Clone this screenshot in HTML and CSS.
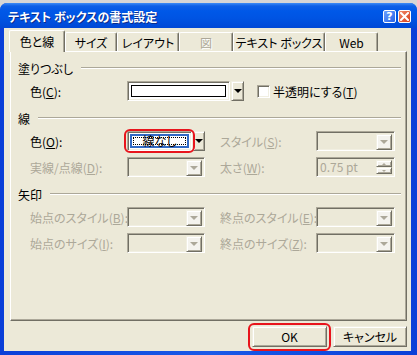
FILE: index.html
```html
<!DOCTYPE html>
<html lang="ja">
<head>
    <meta charset="utf-8">
    <title>テキスト ボックスの書式設定</title>
    <link rel="stylesheet" href="styles.css">
</head>
<body>
<div class="window">
    <div class="titlebar">
        <span class="title">テキスト ボックスの書式設定</span>
        <div class="caption-btns">
            <span class="cap help">?</span>
            <span class="cap close">
                <svg width="9" height="9" viewBox="0 0 9 9"><path d="M1 1 L8 8 M8 1 L1 8" stroke="#fff" stroke-width="2" stroke-linecap="square"/></svg>
            </span>
        </div>
    </div>
    <div class="client">
        <div class="tabs">
            <div class="tab active w-color">色と線</div>
            <div class="tab w-size">サイズ</div>
            <div class="tab w-layout">レイアウト</div>
            <div class="tab w-pic disabled">図</div>
            <div class="tab w-text">テキスト ボックス</div>
            <div class="tab w-web">Web</div>
        </div>
        <div class="panel">
            <div class="group-head">塗りつぶし</div>
            <div class="row first">
                <span class="lbl">色(<u>C</u>):</span>
                <div class="fill-combo">
                    <div class="sunken fill-field"><div class="swatch"></div></div>
                    <div class="raised drop-btn"><i class="arrow"></i></div>
                </div>
                <span class="sunken check"></span>
                <span class="check-lbl">半透明にする(<u>T</u>)</span>
            </div>

            <div class="group-head">線</div>
            <div class="row first">
                <span class="lbl">色(<u>O</u>):</span>
                <div class="line-combo">
                    <div class="sunken line-field">
                        <div class="focus"><div class="dots">線なし</div></div>
                        <span class="mark"></span>
                    </div>
                    <div class="raised drop-btn small"><i class="arrow"></i></div>
                </div>
                <span class="lbl2 off">スタイル(<u>S</u>):</span>
                <div class="sunken combo wide"><div class="raised drop-in"><i class="arrow off"></i></div></div>
            </div>
            <div class="row">
                <span class="lbl off">実線/点線(<u>D</u>):</span>
                <div class="sunken combo"><div class="raised drop-in"><i class="arrow off"></i></div></div>
                <span class="lbl2 off">太さ(<u>W</u>):</span>
                <div class="sunken combo wide spin">
                    <span class="spin-val">0.75 pt</span>
                    <div class="spin-btns">
                        <div class="raised spin-btn"><i class="tri up"></i></div>
                        <div class="raised spin-btn"><i class="tri"></i></div>
                    </div>
                </div>
            </div>

            <div class="group-head">矢印</div>
            <div class="row first">
                <span class="lbl off">始点のスタイル(<u>B</u>):</span>
                <div class="sunken combo"><div class="raised drop-in"><i class="arrow off"></i></div></div>
                <span class="lbl2 off">終点のスタイル(<u>E</u>):</span>
                <div class="sunken combo wide"><div class="raised drop-in"><i class="arrow off"></i></div></div>
            </div>
            <div class="row">
                <span class="lbl off">始点のサイズ(<u>I</u>):</span>
                <div class="sunken combo"><div class="raised drop-in"><i class="arrow off"></i></div></div>
                <span class="lbl2 off">終点のサイズ(<u>Z</u>):</span>
                <div class="sunken combo wide"><div class="raised drop-in"><i class="arrow off"></i></div></div>
            </div>
        </div>
        <div class="buttons">
            <div class="raised btn ok">OK<span class="mark"></span></div>
            <div class="raised btn cancel">キャンセル</div>
        </div>
    </div>
</div>
</body>
</html>
```

FILE: styles.css
```css
body {
    margin: 0;
    background-color: #d6d6d6;
    font-family: "Noto Sans CJK JP", "DejaVu Sans", sans-serif;
    font-size: 12px;
    font-feature-settings: "palt";
    color: #000;
}
u {
    text-decoration: underline;
    text-underline-offset: 1px;
}
.window {
    margin-top: 3px;
    width: 417px;
    height: 352px;
    box-sizing: border-box;
    background: linear-gradient(90deg, #0a3fd8, #1a5ae8 50%, #0a3fd8);
    border-radius: 7px 7px 0 0;
    padding: 0 6px 4px 4px;
    display: flex;
    flex-direction: column;
}
.titlebar {
    height: 25px;
    margin: 0 -6px 0 -4px;
    padding: 0 6px 0 8px;
    border-radius: 7px 7px 0 0;
    background: linear-gradient(#3d8cf7 0, #0d5fe6 3px, #0058e8 8px, #0054e3 60%, #0048d6 100%);
    display: flex;
    align-items: center;
    justify-content: space-between;
}
.title {
    color: #fff;
    font-weight: bold;
    font-size: 12px;
    text-shadow: 1px 1px #0a2c8c;
    padding-top: 1px;
}
.caption-btns {
    display: flex;
    gap: 2px;
    margin-top: 1px;
}
.cap {
    width: 13px;
    height: 13px;
    box-sizing: border-box;
    border: 1px solid #fff;
    border-radius: 2px;
    display: flex;
    align-items: center;
    justify-content: center;
    color: #fff;
    font: bold 11px "DejaVu Sans", sans-serif;
}
.help {
    background: linear-gradient(135deg, #6aa0ff, #2a64e8);
}
.close {
    background: linear-gradient(135deg, #f08a6a, #d8401c);
}
.client {
    flex: 1;
    background-color: #ece9d8;
    display: flex;
    flex-direction: column;
}
.tabs {
    height: 21px;
    margin: 2px 0 0 5px;
    display: flex;
    align-items: flex-end;
}
.tab {
    height: 19px;
    box-sizing: border-box;
    border: 1px solid #fff;
    border-bottom: none;
    border-right: 1px solid #716f64;
    box-shadow: inset -1px 0 #aca899;
    border-radius: 2px 2px 0 0;
    display: flex;
    align-items: center;
    justify-content: center;
    line-height: 1;
    padding-top: 1px;
}
.tab.active {
    height: 22px;
    margin-bottom: -1px;
    position: relative;
    z-index: 1;
    background-color: #ece9d8;
    padding-top: 0;
}
.tab.disabled {
    color: #aca899;
    text-shadow: 1px 1px #fff;
}
.w-color { width: 56px; }
.w-size { width: 52px; }
.w-layout { width: 62px; }
.w-pic { width: 54px; }
.w-text { width: 92px; }
.w-web { width: 53px; }
.panel {
    height: 270px;
    margin: 0 4px 0 6px;
    box-sizing: border-box;
    border: 1px solid #fff;
    border-right-color: #716f64;
    border-bottom-color: #716f64;
    box-shadow: inset -1px -1px #aca899;
    padding: 8px 5px 0 7px;
}
.group-head {
    height: 16px;
    display: flex;
    align-items: center;
    gap: 8px;
    margin-top: 9px;
}
.group-head:first-child {
    margin-top: 0;
}
.group-head::after {
    content: "";
    flex: 1;
    border-top: 1px solid #aca899;
    border-bottom: 1px solid #fff;
}
.row {
    height: 20px;
    margin-top: 6px;
    padding-left: 12px;
    display: flex;
    align-items: center;
}
.row.first {
    margin-top: 5px;
}
.lbl {
    width: 97px;
    flex: none;
    white-space: nowrap;
}
.lbl2 {
    width: 96px;
    margin-left: 15px;
    flex: none;
    white-space: nowrap;
}
.off {
    color: #aca899;
}
.sunken {
    box-sizing: border-box;
    border: 1px solid;
    border-color: #aca899 #fff #fff #aca899;
    box-shadow: inset 1px 1px #716f64, inset -1px -1px #f1efe2;
}
.raised {
    box-sizing: border-box;
    border: 1px solid;
    border-color: #f1efe2 #716f64 #716f64 #f1efe2;
    box-shadow: inset 1px 1px #fff, inset -1px -1px #aca899;
    background-color: #ece9d8;
}
.arrow {
    width: 0;
    height: 0;
    border-left: 4px solid transparent;
    border-right: 4px solid transparent;
    border-top: 4px solid #000;
}
.arrow.off {
    border-top-color: #aca899;
}
.fill-combo {
    display: flex;
    gap: 1px;
    height: 20px;
    width: 117px;
    flex: none;
}
.fill-field {
    width: 103px;
    height: 20px;
    background-color: #fff;
    padding: 3px;
}
.swatch {
    height: 100%;
    box-sizing: border-box;
    border: 1px solid #000;
    background-color: #fff;
}
.drop-btn {
    width: 13px;
    height: 20px;
    display: flex;
    align-items: center;
    justify-content: center;
}
.drop-btn.small {
    width: 12px;
}
.check {
    width: 13px;
    height: 13px;
    background-color: #fff;
    margin-left: 13px;
    flex: none;
}
.check-lbl {
    margin-left: 3px;
}
.line-combo {
    display: flex;
    gap: 1px;
    height: 20px;
    width: 78px;
    flex: none;
}
.line-field {
    width: 66px;
    height: 20px;
    background-color: #fff;
    padding: 2px;
    position: relative;
}
.focus {
    height: 100%;
    box-sizing: border-box;
    border: 2px solid #316ac5;
    padding: 1px;
}
.dots {
    height: 100%;
    box-sizing: border-box;
    border: 1px dotted #000;
    display: flex;
    align-items: center;
    justify-content: center;
    line-height: 1;
}
.mark {
    position: absolute;
    border: 2px solid #e8141c;
    border-radius: 6px;
    pointer-events: none;
}
.line-field .mark {
    left: -4px;
    right: -4px;
    top: -3px;
    bottom: -3px;
}
.combo {
    width: 78px;
    height: 20px;
    flex: none;
    padding: 2px;
    display: flex;
    justify-content: flex-end;
}
.combo.wide {
    width: 79px;
}
.drop-in {
    width: 16px;
    height: 16px;
    display: flex;
    align-items: center;
    justify-content: center;
    background-color: #f4f3ee;
}
.spin {
    justify-content: space-between;
    align-items: center;
}
.spin-val {
    color: #aca899;
    padding-left: 1px;
    line-height: 1;
}
.spin-btns {
    display: flex;
    flex-direction: column;
    align-self: stretch;
}
.spin-btn {
    width: 16px;
    height: 8px;
    display: flex;
    align-items: center;
    justify-content: center;
    background-color: #f4f3ee;
}
.tri {
    width: 0;
    height: 0;
    border-left: 2px solid transparent;
    border-right: 2px solid transparent;
    border-top: 2px solid #aca899;
}
.tri.up {
    border-top: none;
    border-bottom: 2px solid #aca899;
}
.buttons {
    display: flex;
    justify-content: flex-end;
    gap: 6px;
    margin: 5px 4px 0 0;
}
.btn {
    height: 21px;
    display: flex;
    align-items: center;
    justify-content: center;
    position: relative;
    line-height: 1;
}
.ok {
    width: 75px;
}
.cancel {
    width: 74px;
}
.ok .mark {
    left: -5px;
    right: -5px;
    top: -4px;
    bottom: -5px;
}
```
